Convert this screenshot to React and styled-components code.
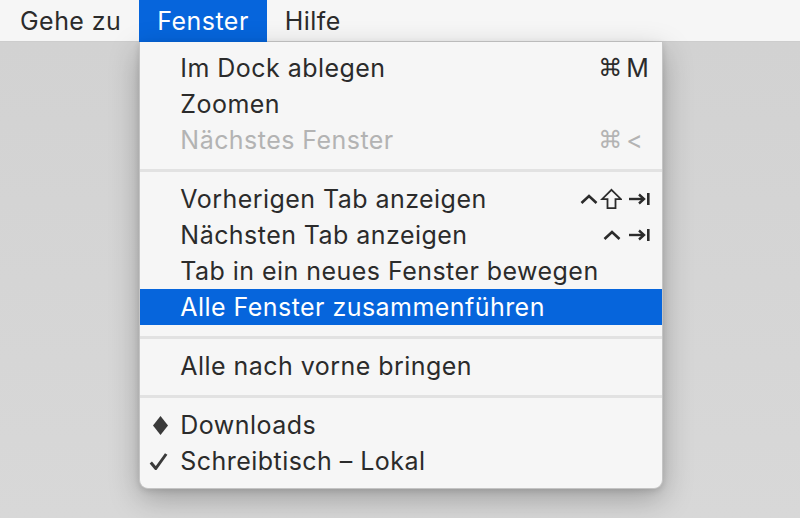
import React from 'react'
import styled, { createGlobalStyle } from 'styled-components'

const Global = createGlobalStyle`
  html, body {
    margin: 0;
    padding: 0;
    height: 100%;
  }
  body {
    background: #d6d6d6;
    font-family: Inter, "Liberation Sans", Arial, sans-serif;
    overflow: hidden;
  }
  #root {
    height: 100%;
  }
`

const CtrlIcon = () => (
  <svg width="21" height="12" viewBox="0 0 21 12">
    <polyline points="3.5,10 11,3 18.5,10" fill="none" stroke="currentColor" strokeWidth="2.6" />
  </svg>
)

const ShiftIcon = () => (
  <svg width="22" height="22" viewBox="0 0 22 22">
    <path d="M11.5 1.8 L21 11.2 L15.5 11.2 L15.5 20.2 L7.5 20.2 L7.5 11.2 L2 11.2 Z" fill="none" stroke="currentColor" strokeWidth="1.8" strokeLinejoin="miter" />
  </svg>
)

const TabIcon = () => (
  <svg width="24" height="16" viewBox="0 0 24 16">
    <line x1="3" y1="8" x2="18" y2="8" stroke="currentColor" strokeWidth="2.4" />
    <polyline points="13,3.5 18,8 13,12.5" fill="none" stroke="currentColor" strokeWidth="2.4" />
    <rect x="21" y="2" width="2.6" height="12" fill="currentColor" />
  </svg>
)

const DiamondIcon = () => (
  <svg width="15" height="19" viewBox="0 0 15 19">
    <polygon points="7.5,0 15,9.5 7.5,19 0,9.5" fill="currentColor" />
  </svg>
)

const CheckIcon = () => (
  <svg width="19" height="19" viewBox="0 0 19 19">
    <polyline points="1.8,10.5 6.8,16.5 17.2,2" fill="none" stroke="currentColor" strokeWidth="3" strokeLinejoin="round" />
  </svg>
)

const menuItems = [
  { label: 'Im Dock ablegen', mods: ['cmd'], key: 'M' },
  { label: 'Zoomen' },
  { label: 'Nächstes Fenster', mods: ['cmd'], key: '<', disabled: true },
  { sep: true },
  { label: 'Vorherigen Tab anzeigen', mods: ['ctrl', 'shift'], key: 'tab' },
  { label: 'Nächsten Tab anzeigen', mods: ['ctrl'], key: 'tab' },
  { label: 'Tab in ein neues Fenster bewegen' },
  { label: 'Alle Fenster zusammenführen', active: true },
  { sep: true },
  { label: 'Alle nach vorne bringen' },
  { sep: true },
  { label: 'Downloads', mark: 'diamond' },
  { label: 'Schreibtisch – Lokal', mark: 'check' },
]

const modIcon = m => {
  if (m === 'cmd') return <Cmd>⌘</Cmd>
  if (m === 'ctrl') return <CtrlIcon />
  return <ShiftIcon />
}

function App() {
  return (
    <Page>
      <Global />
      <MenuBar>
        <BarItem>Gehe zu</BarItem>
        <BarItem open>
          Fenster
          <Dropdown>
            {menuItems.map((item, i) =>
              item.sep ? (
                <Separator key={i} />
              ) : (
                <Row key={i} active={item.active} disabled={item.disabled}>
                  <Mark>
                    {item.mark === 'diamond' && <DiamondIcon />}
                    {item.mark === 'check' && <CheckIcon />}
                  </Mark>
                  <Label>{item.label}</Label>
                  {item.key && (
                    <Shortcut>
                      <Mods>{item.mods.map((m, j) => <React.Fragment key={j}>{modIcon(m)}</React.Fragment>)}</Mods>
                      <Key>{item.key === 'tab' ? <TabIcon /> : item.key}</Key>
                    </Shortcut>
                  )}
                </Row>
              )
            )}
          </Dropdown>
        </BarItem>
        <BarItem>Hilfe</BarItem>
      </MenuBar>
      <Desktop />
    </Page>
  )
}

const Page = styled.div`
  display: flex;
  flex-direction: column;
  height: 100%;
`

const MenuBar = styled.div`
  display: flex;
  height: 42px;
  padding-left: 2px;
  background: #f6f6f6;
  border-bottom: 1px solid #cdcdcd;
  box-sizing: border-box;
`

const BarItem = styled.div`
  position: relative;
  display: flex;
  align-items: center;
  padding: 0 18px;
  height: 42px;
  font-size: 25px;
  letter-spacing: 0.45px;
  color: ${p => (p.open ? '#ffffff' : '#2b2b2b')};
  background: ${p => (p.open ? '#0665dc' : 'transparent')};
`

const Desktop = styled.div`
  flex: 1;
  background: linear-gradient(180deg, #d2d2d2 0%, #d8d8d8 100%);
`

const Dropdown = styled.div`
  position: absolute;
  top: 42px;
  left: 0;
  width: 524px;
  padding: 8px 0 9px;
  box-sizing: border-box;
  background: #f6f6f6;
  border: 1px solid #c4c4c4;
  border-top: none;
  border-radius: 0 0 9px 9px;
  box-shadow: 0 10px 30px rgba(0, 0, 0, 0.26), 0 2px 6px rgba(0, 0, 0, 0.12);
  letter-spacing: 0.45px;
  z-index: 2;
`

const Row = styled.div`
  display: flex;
  align-items: center;
  height: 36px;
  padding-right: 12px;
  font-size: 25px;
  background: ${p => (p.active ? '#0665dc' : 'transparent')};
  color: ${p => (p.active ? '#ffffff' : p.disabled ? '#b3b3b3' : '#2b2b2b')};
`

const Mark = styled.span`
  width: 40px;
  display: flex;
  justify-content: flex-end;
  align-items: center;
  padding-right: 12px;
  box-sizing: border-box;
  color: #3a3a3a;
`

const Label = styled.span`
  flex: 1;
  white-space: nowrap;
`

const Shortcut = styled.span`
  display: flex;
  align-items: center;
  gap: 4px;
`

const Mods = styled.span`
  display: flex;
  align-items: center;
  justify-content: flex-end;
  gap: 1px;
`

const Cmd = styled.span`
  font-family: "DejaVu Sans", sans-serif;
  font-size: 24px;
  letter-spacing: 0;
`

const Key = styled.span`
  width: 24px;
  display: flex;
  align-items: center;
  letter-spacing: 0;
`

const Separator = styled.div`
  height: 23px;
  display: flex;
  align-items: center;
  &::before {
    content: '';
    flex: 1;
    height: 3px;
    background: #e2e2e2;
    margin-top: 2px;
  }
`

export default App
